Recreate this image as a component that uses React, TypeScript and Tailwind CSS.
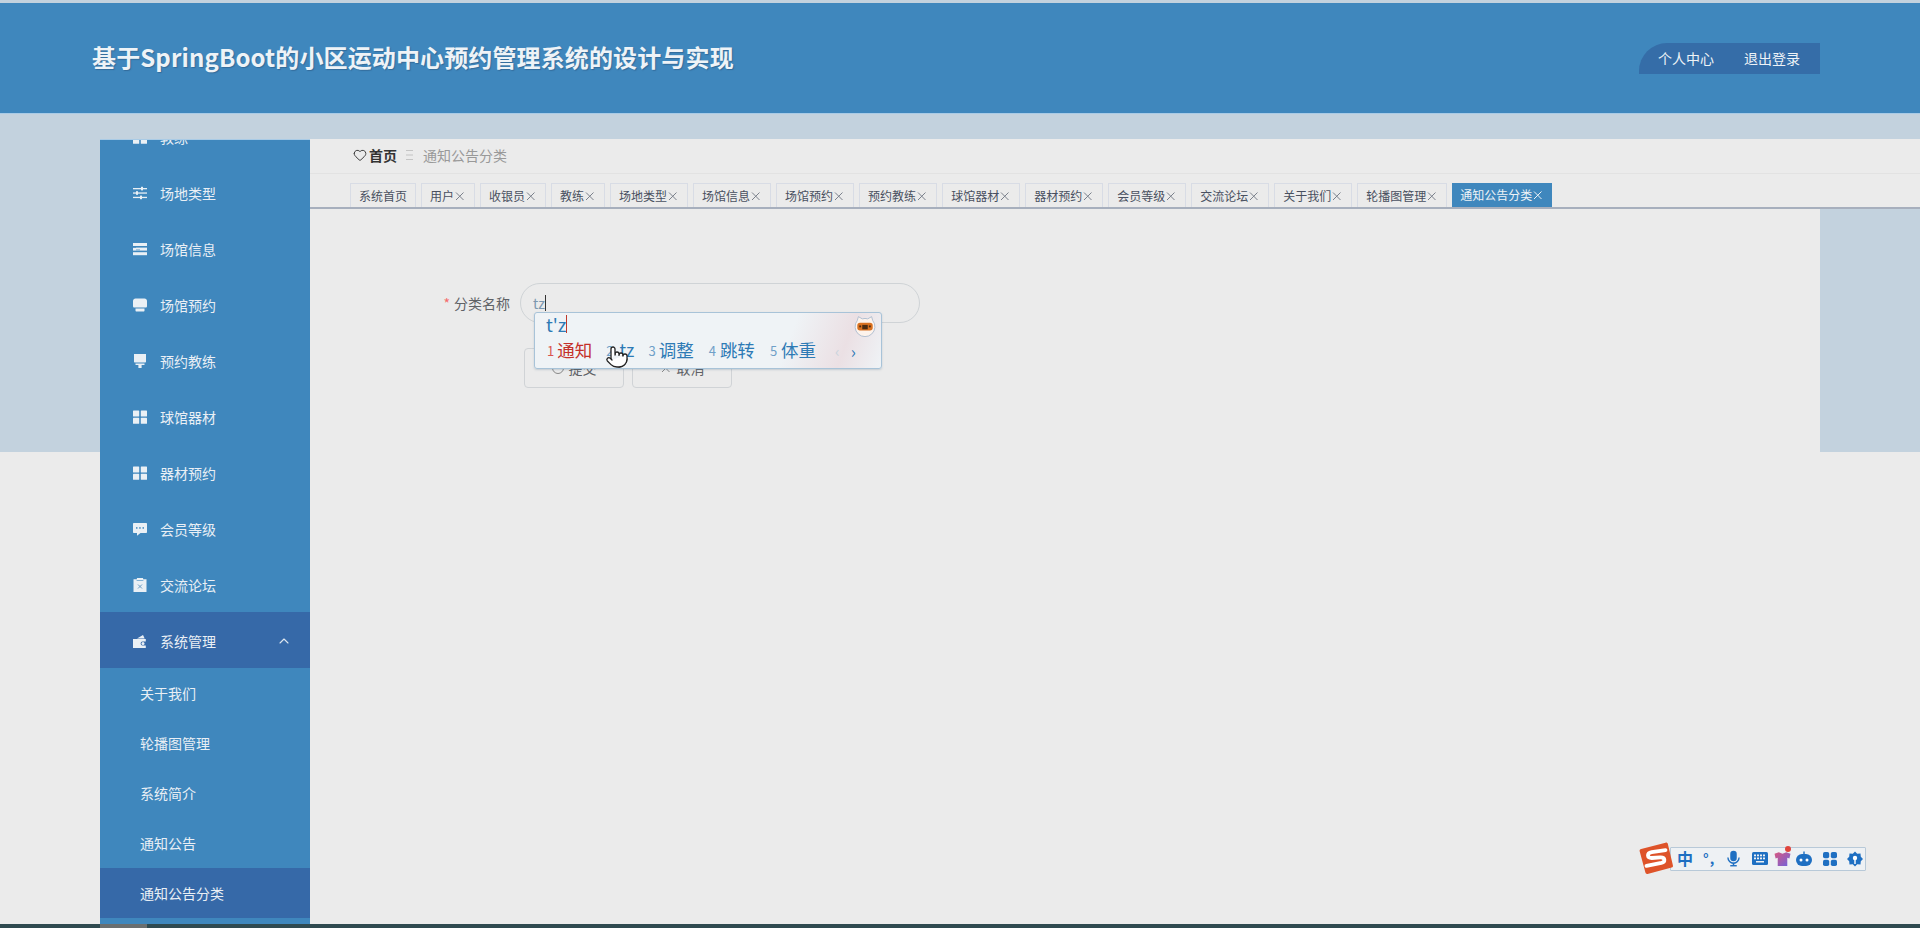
import React from "react";
import { ChevronUp, Heart, Pointer } from "lucide-react";

const FONT = '"Noto Sans CJK SC","Noto Sans",sans-serif';

const I = ({ children }: { children: React.ReactNode }) => (
  <svg viewBox="0 0 14 14" className="w-[14px] h-[14px] shrink-0" fill="#eaf0f5">{children}</svg>
);

const GridIcon = () => (
  <I>
    <rect x="0" y="0.5" width="6.2" height="6" rx="0.6" />
    <rect x="7.8" y="0.5" width="6.2" height="6" rx="0.6" />
    <rect x="0" y="7.8" width="6.2" height="6" rx="0.6" />
    <rect x="7.8" y="7.8" width="6.2" height="6" rx="0.6" />
  </I>
);
const SlidersIcon = () => (
  <I>
    <rect x="0" y="2" width="14" height="1.3" />
    <rect x="8" y="0.8" width="2" height="3.6" />
    <rect x="0" y="6.4" width="14" height="1.3" />
    <rect x="3" y="5.2" width="2" height="3.6" />
    <rect x="0" y="10.8" width="14" height="1.3" />
    <rect x="7" y="9.6" width="2" height="3.6" />
  </I>
);
const ListIcon = () => (
  <I>
    <rect x="0" y="1" width="14" height="3" />
    <rect x="0" y="5.6" width="14" height="3" />
    <rect x="0" y="10.2" width="14" height="3" />
    <rect x="0" y="4.9" width="3" height="0.7" fill="#3f87bd" />
    <rect x="3" y="7.6" width="4" height="0.6" fill="#3f87bd" />
  </I>
);
const TrayIcon = () => (
  <I>
    <path d="M2.5 0.5h9c1.4 0 2.5 1.2 2.5 2.5v5.2c0 .8-.6 1.3-1.3 1.3H1.3C.6 9.5 0 9 0 8.2V3C0 1.7 1.1.5 2.5.5z" />
    <path d="M2.5 10.6h9v2c0 .6-.4 1-1 1h-7c-.6 0-1-.4-1-1z" />
  </I>
);
const BrushIcon = () => (
  <I>
    <path d="M1 0h12v7.6c0 .6-.4 1-1 1H2c-.6 0-1-.4-1-1z" />
    <path d="M2.5 9.6h9V11H8.6v3H5.4v-3H2.5z" />
  </I>
);
const ChatIcon = () => (
  <I>
    <path d="M1 1h12c.6 0 1 .4 1 1v8c0 .6-.4 1-1 1H7.500L4 13.800V11H1c-.6 0-1-.4-1-1V2c0-.6.4-1 1-1z" />
    <rect x="3" y="5.200" width="1.500" height="1.500" fill="#3f87bd" />
    <rect x="6.200" y="5.200" width="1.500" height="1.500" fill="#3f87bd" />
    <rect x="9.500" y="5.200" width="1.500" height="1.500" fill="#3f87bd" />
  </I>
);
const ClipIcon = () => (
  <I>
    <path d="M.5 1.200h3.400V0h6.200v1.200h3.400V14H.5z" />
    <rect x="3.600" y="2.300" width="6.800" height="0.6" fill="#3f87bd" />
    <path d="M5 6.500l4 4M9 6.500l-4 4" stroke="#6a9cc4" strokeWidth="1" fill="none" />
  </I>
);
const WalletIcon = () => (
  <I>
    <path d="M4 4.500L10 1l1.700 3.500z" />
    <path d="M0 5h12.800v2.600H9.500a1.900 1.900 0 0 0 0 3.800h3.300V14H0z" />
    <circle cx="10" cy="9.500" r="1.500" />
  </I>
);

const menu: [string, React.FC][] = [
  ["教练", GridIcon],
  ["场地类型", SlidersIcon],
  ["场馆信息", ListIcon],
  ["场馆预约", TrayIcon],
  ["预约教练", BrushIcon],
  ["球馆器材", GridIcon],
  ["器材预约", GridIcon],
  ["会员等级", ChatIcon],
  ["交流论坛", ClipIcon],
];
const sub = ["关于我们", "轮播图管理", "系统简介", "通知公告", "通知公告分类"];
const tabs = ["用户", "收银员", "教练", "场地类型", "场馆信息", "场馆预约", "预约教练", "球馆器材", "器材预约", "会员等级", "交流论坛", "关于我们", "轮播图管理"];

const X = ({ color = "#7b818c" }: { color?: string }) => (
  <svg viewBox="0 0 12 12" className="w-[12px] h-[12px] shrink-0" stroke={color} strokeWidth="1" fill="none">
    <path d="M2 2.500l7.500 7.500M9.500 2.500L2 10" />
  </svg>
);

function Sidebar() {
  return (
    <aside className="w-[210px] shrink-0 overflow-hidden bg-[#3f87bd] border-t border-[#a9cbe6] text-[14px] text-[#e9eff5]">
      <div className="-mt-[32px]">
        {menu.map(([label, Icon]) => (
          <div key={label} className="h-[56px] pt-[2px] flex items-center pl-[33px] gap-[13px]">
            <Icon />
            <span>{label}</span>
          </div>
        ))}
        <div className="h-[56px] pt-[2px] flex items-center pl-[33px] gap-[13px] bg-[#3669a8]">
          <WalletIcon />
          <span className="flex-1">系统管理</span>
          <ChevronUp size={16} strokeWidth={1.600} className="mr-[18px] text-[#dfe8f0]" />
        </div>
        {sub.map((s) => (
          <div key={s} className={`h-[50px] flex items-center pl-[40px] ${s === "通知公告分类" ? "bg-[#3669a8]" : ""}`}>
            {s}
          </div>
        ))}
      </div>
    </aside>
  );
}

function Ime() {
  return (
    <div className="absolute left-[224px] top-[103px] w-[348px] h-[57px] rounded-[3px] border border-[#a8c3d8] bg-[linear-gradient(110deg,#eff3f6_72%,#ebe0e4_88%,#eff3f6_100%)] shadow-[0_1px_2px_rgba(80,110,140,0.25)] text-[#2d7ab5]">
      <div className="flex items-center pl-[11px] h-[22px] text-[18px] leading-none">
        <span>t&apos;z</span>
        <span className="w-[1px] h-[18px] bg-[#c0392b]" />
      </div>
      <svg viewBox="0 0 20 20" className="absolute right-[5px] top-[2px] w-[22px] h-[22px]">
        <path d="M3 5L4 1.500 7.500 3.500a9 9 0 0 1 5 0L16 1.500 17 5a9 9 0 1 1-14 0z" fill="#fdf3ec" stroke="#a9bace" strokeWidth="0.800" />
        <rect x="3" y="7" width="14" height="7" rx="2.500" fill="#d9701f" />
        <rect x="7.500" y="9" width="5" height="4" fill="#4a2a10" />
        <rect x="4.800" y="9.500" width="1.700" height="1.700" fill="#4a2a10" />
        <rect x="13.500" y="9.500" width="1.700" height="1.700" fill="#4a2a10" />
      </svg>
      <div className="flex items-center pl-[11px] h-[30px] text-[17.5px] leading-none">
        <span className="text-[13px] text-[#d9534f] mr-[3px] ml-[1px]">1</span>
        <span className="text-[#c4302b]">通知</span>
        <span className="text-[13px] text-[#6fa0c8] ml-[14px]">2</span>
        <span className="ml-[1px] w-[20px] text-right">tz</span>
        <span className="text-[13px] text-[#6fa0c8] ml-[14px] mr-[3px]">3</span>
        <span>调整</span>
        <span className="text-[13px] text-[#6fa0c8] ml-[15px] mr-[4px]">4</span>
        <span>跳转</span>
        <span className="text-[13px] text-[#6fa0c8] ml-[15px] mr-[4px]">5</span>
        <span>体重</span>
        <span className="ml-[19px] text-[15px] text-[#c9d4dd]">‹</span>
        <span className="ml-[11px] text-[17px] text-[#2d7ab5]">›</span>
      </div>
      <Pointer size={24} strokeWidth={1.300} className="absolute left-[70px] top-[32px] text-[#222] fill-white" />
    </div>
  );
}

function Form() {
  return (
    <div className="relative flex-1 w-[1510px] pt-[74px] bg-[#ebebeb]">
      <div className="flex items-center">
        <label className="w-[200px] text-right text-[14px] text-[#606266]">
          <span className="text-[#f56c6c] mr-[4px]">*</span>分类名称
        </label>
        <div className="ml-[10px] w-[400px] h-[40px] rounded-[20px] border border-[#cfd3d6] flex items-center pl-[12px] text-[14px] text-[#7c98b0]">
          tz<span className="w-[1px] h-[16px] bg-[#333]" />
        </div>
      </div>
      <div className="flex gap-[8px] ml-[214px] mt-[25px] text-[14px] text-[#606266]">
        <button className="w-[100px] h-[40px] rounded-[4px] border border-[#d0d3d6] flex items-center justify-center gap-[5px]">
          <span className="w-[12px] h-[12px] rounded-full border border-[#888]" />
          提交
        </button>
        <button className="w-[100px] h-[40px] rounded-[4px] border border-[#d0d3d6] flex items-center justify-center gap-[5px]">
          <X color="#888" />
          取消
        </button>
      </div>
      <Ime />
    </div>
  );
}

function Sogou() {
  return (
    <div className="absolute right-[54px] bottom-[57px] w-[196px] h-[24px] bg-[#eef1f4] border border-[#b8c9d8] rounded-[1px] flex items-center text-[#1e6fc2]">
      <svg viewBox="0 0 34 32" className="absolute -left-[33px] -top-[7px] w-[36px] h-[34px]">
        <path d="M3 7.500L26 1.500c1-.3 2 .3 2.200 1.200L33 23c.2 1-.3 1.800-1.200 2L9 31c-1 .2-1.800-.3-2-1.200L1.500 9.500C1.300 8.600 2 7.700 3 7.500z" fill="#de5329" />
        <path d="M26 8.500L13 10.500c-5 1-4.500 5.500 0 5.500l8-.6c5-.2 5 4.400 1 5.300l-14 2.800" fill="none" stroke="#fff" strokeWidth="3.600" strokeLinecap="round" />
      </svg>
      <span className="absolute left-[6px] top-[0px] text-[16px] leading-[20px] font-bold">中</span>
      <span className="absolute left-[32px] top-[0px] text-[14px] leading-[20px] font-bold tracking-[1px]">°,</span>
      <svg viewBox="0 0 14 18" className="absolute left-[56px] top-[2px] w-[13px] h-[18px]" fill="#1e6fc2">
        <rect x="3.500" y="0" width="7" height="11.500" rx="3.500" />
        <path d="M1 7.500a6 6 0 0 0 12 0" fill="none" stroke="#1e6fc2" strokeWidth="1.500" />
        <rect x="6.200" y="13" width="1.600" height="3" />
        <rect x="3.500" y="15.500" width="7" height="1.500" />
      </svg>
      <svg viewBox="0 0 16 13" className="absolute left-[81px] top-[4px] w-[16px] h-[13px]">
        <rect x="0" y="0" width="16" height="13" rx="1.500" fill="#1e6fc2" />
        <g fill="#eef1f4">
          <rect x="2" y="2.500" width="2" height="1.800" />
          <rect x="5" y="2.500" width="2" height="1.800" />
          <rect x="8" y="2.500" width="2" height="1.800" />
          <rect x="11" y="2.500" width="2" height="1.800" />
          <rect x="2" y="5.500" width="2" height="1.800" />
          <rect x="5" y="5.500" width="2" height="1.800" />
          <rect x="8" y="5.500" width="2" height="1.800" />
          <rect x="11" y="5.500" width="2" height="1.800" />
          <rect x="4" y="9" width="8" height="1.500" />
        </g>
      </svg>
      <svg viewBox="0 0 16 16" className="absolute left-[103px] top-[2px] w-[17px] h-[17px]">
        <defs>
          <linearGradient id="shirt" x1="0" y1="0" x2="1" y2="1">
            <stop offset="0" stopColor="#d9577f" />
            <stop offset="1" stopColor="#6d63e0" />
          </linearGradient>
        </defs>
        <path d="M0.500 3.500l4-1.500 3.500 1.500L11.500 2l4 1.500-1 4.500-2-.6V15H3.500V7.400l-2 .6z" fill="url(#shirt)" />
      </svg>
      <span className="absolute left-[114px] -top-[2px] w-[6px] h-[6px] rounded-full bg-[#e0443c]" />
      <svg viewBox="0 0 18 16" className="absolute left-[124px] top-[3px] w-[18px] h-[16px]" fill="#1e6fc2">
        <rect x="8.300" y="0.500" width="1.400" height="3" />
        <rect x="1" y="3" width="16" height="12" rx="6" />
        <circle cx="6" cy="9" r="1.500" fill="#fff" />
        <circle cx="12" cy="9" r="1.500" fill="#fff" />
      </svg>
      <svg viewBox="0 0 14 14" className="absolute left-[152px] top-[4px] w-[14px] h-[14px]" fill="#1e6fc2">
        <rect x="0" y="0" width="6.200" height="6.200" rx="1.800" />
        <rect x="7.800" y="0" width="6.200" height="6.200" rx="1.800" />
        <rect x="0" y="7.800" width="6.200" height="6.200" rx="1.800" />
        <rect x="7.800" y="7.800" width="6.200" height="6.200" rx="1.800" />
      </svg>
      <svg viewBox="0 0 16 16" className="absolute left-[176px] top-[3px] w-[16px] h-[16px]" fill="#1e6fc2">
        <path d="M8 0.500l2.200 2.300 3.300-.3.300 3.300L16 8l-2.200 2.200-.3 3.300-3.300-.3L8 15.500l-2.200-2.300-3.300.3-.3-3.300L0 8l2.200-2.200.3-3.300 3.300.3z" />
        <circle cx="8" cy="7" r="2.200" fill="#fff" />
        <rect x="7.300" y="8" width="1.400" height="5" fill="#fff" />
      </svg>
    </div>
  );
}

export default function App() {
  return (
    <div
      className="relative h-[928px] w-full overflow-hidden flex flex-col pt-[3px] bg-[linear-gradient(#c3d2de_452px,#ebebeb_452px)]"
      style={{ fontFamily: FONT }}
    >
      <header className="h-[111px] shrink-0 bg-[#3f87bd] border-b border-[#a9cbe6] flex items-center justify-between pl-[92px] pr-[100px]">
        <h1 className="text-[24px] font-bold tracking-[0.13px] text-[#eef3f7] [text-shadow:1px_1px_1px_rgba(40,80,120,0.5)] -mt-[2px]">
          基于SpringBoot的小区运动中心预约管理系统的设计与实现
        </h1>
        <div className="h-[31px] w-[181px] bg-[#356da8] rounded-tl-[28px] flex items-center gap-[30px] pl-[19px] text-[14px] text-[#eef3f7]">
          <span>个人中心</span>
          <span>退出登录</span>
        </div>
      </header>

      <div className="flex-1 min-h-0 flex pt-[25px] pl-[100px]">
        <Sidebar />
        <main className="flex-1 min-w-0 flex flex-col">
          <div className="h-[35px] shrink-0 bg-[#ebebeb] border-b border-[#e2e2e2] flex items-center pb-[2px] pl-[43px] text-[14px]">
            <Heart size={14} strokeWidth={1.600} className="text-[#333] mr-[2px]" />
            <span className="text-[#333] font-semibold">首页</span>
            <svg viewBox="0 0 8 12" className="w-[8px] h-[12px] mx-[9px]" fill="#c4c4c4">
              <rect x="0" y="1" width="7" height="1" />
              <rect x="0" y="5.500" width="7" height="1" />
              <rect x="0" y="10" width="7" height="1" />
            </svg>
            <span className="text-[#999]">通知公告分类</span>
          </div>
          <div className="h-[35px] shrink-0 bg-[#ebebeb] border-b-2 border-[#a7afbd] flex items-end gap-[5px] pl-[40px] text-[12px] text-[#495060]">
            <span className="h-[24px] px-[8px] flex items-center border border-b-0 border-[#d8dce5]">系统首页</span>
            {tabs.map((t) => (
              <span key={t} className="h-[24px] px-[8px] flex items-center border border-b-0 border-[#d8dce5]">
                {t}
                <X />
              </span>
            ))}
            <span className="h-[24px] px-[8px] flex items-center bg-[#3f87bd] text-[#eef3f7]">
              通知公告分类
              <X color="#eef3f7" />
            </span>
          </div>
          <Form />
        </main>
      </div>

      <div className="h-[4px] shrink-0 bg-[#2f4a50]">
        <div className="ml-[100px] w-[47px] h-full bg-[#6a6f70]" />
      </div>

      <Sogou />
    </div>
  );
}
